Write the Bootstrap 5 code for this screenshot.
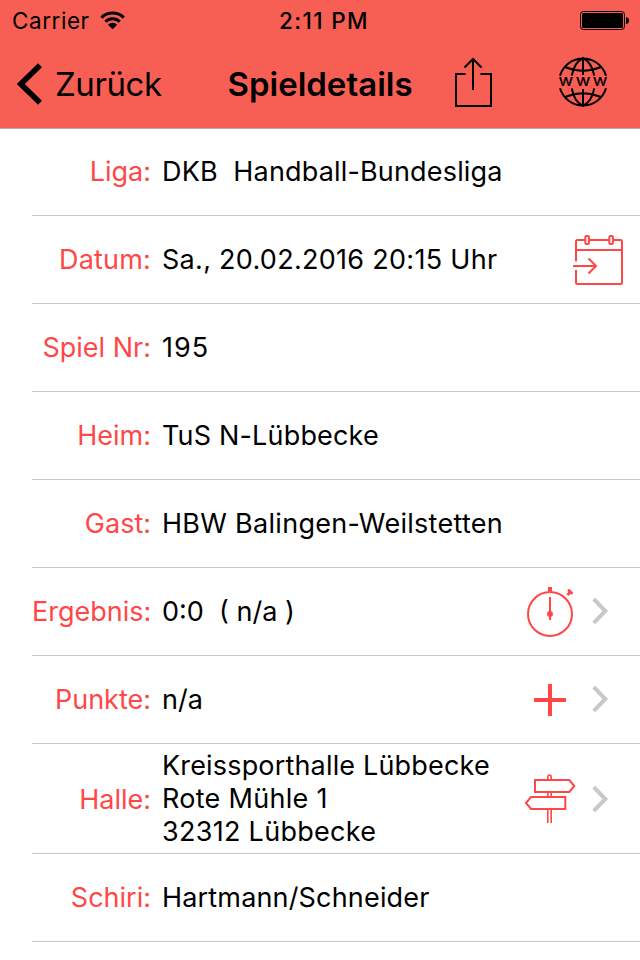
<!DOCTYPE html>
<html lang="de">
<head>
<meta charset="utf-8">
<meta name="viewport" content="width=device-width, initial-scale=1">
<title>Spieldetails</title>
<link rel="stylesheet" href="https://cdn.jsdelivr.net/npm/bootstrap@5.3.0/dist/css/bootstrap.min.css">
<style>
body{font-family:Inter,"Liberation Sans",sans-serif;color:#000;background:#fff;overflow:hidden}
.screen{width:640px;height:960px}
.topbar{height:128px;background:#f75f54;box-shadow:0 1px 0 #b2a9a9;position:relative;z-index:1}
.status{height:40px;font-size:22.5px;line-height:40px;padding-left:12px;padding-top:1px}
.titlebar{height:88px;font-size:33px;line-height:88px}
.side{width:214px}
.titlebar .side{padding-left:15px}
.txt{white-space:pre}
.carrier{letter-spacing:.55px}
.wifi{margin-left:8px}
.clock{letter-spacing:1.35px;padding-right:4px}
.back{letter-spacing:-.4px}
.heading{font-size:33px;font-weight:600}
.detail{height:88px;margin-left:32px;border-bottom:1px solid #c8c7cc;font-size:27px;line-height:33px}
.detail.tall{height:110px}
.term{width:119px;color:#ff4747;text-align:right;white-space:nowrap}
.value{margin-left:11px;white-space:pre}
.tall .term{padding-top:2px}
.ls-1{letter-spacing:.17px}
.ls-2{letter-spacing:.29px}
.ls-3{letter-spacing:1px}
.ico{fill:none;stroke:#ff4747;stroke-width:2}
.chev{fill:none;stroke:#c7c7cc;stroke-width:4}
.dark{fill:none;stroke:#000;stroke-width:2}
svg{display:block;flex:none}
</style>
<script src="https://cdn.jsdelivr.net/npm/bootstrap@5.3.0/dist/js/bootstrap.bundle.min.js"></script>
</head>
<body>
<main class="screen">
<header class="topbar">
  <div class="status d-flex">
    <div class="side d-flex">
      <span class="txt carrier">Carrier</span>
      <svg class="wifi" width="30" height="40" viewBox="98 1 30 40"><g fill="none" stroke="#000" stroke-width="3"><path d="M101.4 17.6a15.8 15.8 0 0 1 22.4 0"/><path d="M105.4 21.8a10.2 10.2 0 0 1 14.4 0"/></g><path d="M108 24.7a6.6 6.6 0 0 1 9.2 0L112.6 29.3z"/></svg>
    </div>
    <div class="flex-grow-1 text-center fw-medium txt clock">2:11 PM</div>
    <div class="side d-flex justify-content-end">
      <svg width="64" height="40" viewBox="576 1 64 40"><rect x="580.5" y="11.5" width="44" height="18" rx="3" fill="none" stroke="#000"/><rect x="582" y="13" width="41" height="15" rx="1.500"/><path d="M626 17q3 .5 3 3.500t-3 3.500z"/></svg>
    </div>
  </div>
  <nav class="titlebar d-flex" aria-label="Navigation">
    <a class="side d-flex text-reset text-decoration-none" href="#">
      <svg width="40" height="88" viewBox="15 40 40 88"><path d="M40 65.200 20.800 84 40 102.800" fill="none" stroke="#000" stroke-width="5.600"/></svg>
      <span class="txt back">Zurück</span>
    </a>
    <div class="flex-grow-1 text-center heading txt">Spieldetails</div>
    <div class="side d-flex justify-content-end">
      <svg width="60" height="88" viewBox="440 40 60 88" class="dark"><path d="M465.700 74H456v32h35V74h-10.500M473 90V59M464.500 67.500l8.500-8.500 8.500 8.500"/></svg>
      <svg width="140" height="88" viewBox="500 40 140 88" class="dark"><path d="M560 75.700a24 24 0 0 1 46 0M560 88.300a24 24 0 0 0 46 0M583 58v17M583 89v17M571.800 75.700q2.200-13 11.200-17.700 9 4.700 11.200 17.700M571.800 88.300q2.200 13 11.200 17.700 9-4.700 11.200-17.700M565 67q18 7.500 36 0M565 97q18-7.500 36 0"/><g transform="translate(583 86.400) scale(1.120 1)" font-size="16" fill="#000" stroke="#000" stroke-width=".2" text-anchor="middle"><text x="-15.300">w</text><text>w</text><text x="15.300">w</text></g></svg>
    </div>
  </nav>
</header>
<ul class="list-unstyled mb-0">
  <li class="detail d-flex align-items-center"><span class="term">Liga:</span><span class="value ls-1">DKB  Handball-Bundesliga</span></li>
  <li class="detail d-flex align-items-center"><span class="term ls-1">Datum:</span><span class="value ls-2">Sa., 20.02.2016 20:15 Uhr</span>
    <svg class="ico ms-auto" width="70" height="87" viewBox="570 216 70 87"><path d="M576 261.500V241.500q0-1.500 1.500-1.500H585M590 240h19M614 240h6.500q1.500 0 1.500 1.500V282.500q0 1.500-1.500 1.500H577.500q-1.500 0-1.500-1.500V270M576 250h46M573 266h23M588.500 258.500l7.500 7.500-7.500 7.500"/><rect x="585.300" y="236" width="3.700" height="8" rx="1.200"/><rect x="609.300" y="236" width="3.700" height="8" rx="1.200"/></svg></li>
  <li class="detail d-flex align-items-center"><span class="term">Spiel Nr:</span><span class="value ls-3">195</span></li>
  <li class="detail d-flex align-items-center"><span class="term">Heim:</span><span class="value ls-1">TuS N-Lübbecke</span></li>
  <li class="detail d-flex align-items-center"><span class="term">Gast:</span><span class="value ls-2">HBW Balingen-Weilstetten</span></li>
  <li class="detail d-flex align-items-center"><span class="term">Ergebnis:</span><span class="value">0:0  ( n/a )</span>
    <svg class="ico ms-auto" width="60" height="87" viewBox="522 568 60 87"><circle cx="550" cy="614" r="22"/><path d="M550 597v23"/><g fill="#ff4747" stroke="none"><path d="M548 587h4v4h-4zM567.500 589.500l2-.5 3.500 3.500-.5 2-2.500-.3-1.500 1.800-2-1.500 1.500-2z"/><circle cx="550" cy="614" r="2.900"/></g></svg>
    <svg class="chev" width="58" height="87" viewBox="582 568 58 87"><path d="M593.800 599.200 605.300 611 593.800 622.800"/></svg></li>
  <li class="detail d-flex align-items-center"><span class="term">Punkte:</span><span class="value">n/a</span>
    <svg class="ico ms-auto" width="60" height="87" viewBox="522 656 60 87"><path stroke-width="4" d="M534 700h32M550 684v32"/></svg>
    <svg class="chev" width="58" height="87" viewBox="582 656 58 87"><path d="M593.800 687.200 605.300 699 593.800 710.800"/></svg></li>
  <li class="detail tall d-flex align-items-center"><span class="term">Halle:</span><span class="value ls-1">Kreissporthalle Lübbecke
<span class="ls-2">Rote Mühle 1
32312 Lübbecke</span></span>
    <svg class="ico ms-auto" width="60" height="109" viewBox="522 744 60 109"><path d="M535 780h34.300l5 6-5 6H535zM565.300 797H531l-5 6 5 6h34.300z"/><path stroke-width="1.600" d="M547.800 780v-3q0-2 1.700-2t1.700 2v3M547.800 792v5M551.200 792v5M547.800 809v14M551.200 809v14"/></svg>
    <svg class="chev" width="58" height="109" viewBox="582 744 58 109"><path d="M593.800 787.200 605.300 799 593.800 810.800"/></svg></li>
  <li class="detail d-flex align-items-center"><span class="term">Schiri:</span><span class="value ls-1">Hartmann/Schneider</span></li>
</ul>
</main>
</body>
</html>
